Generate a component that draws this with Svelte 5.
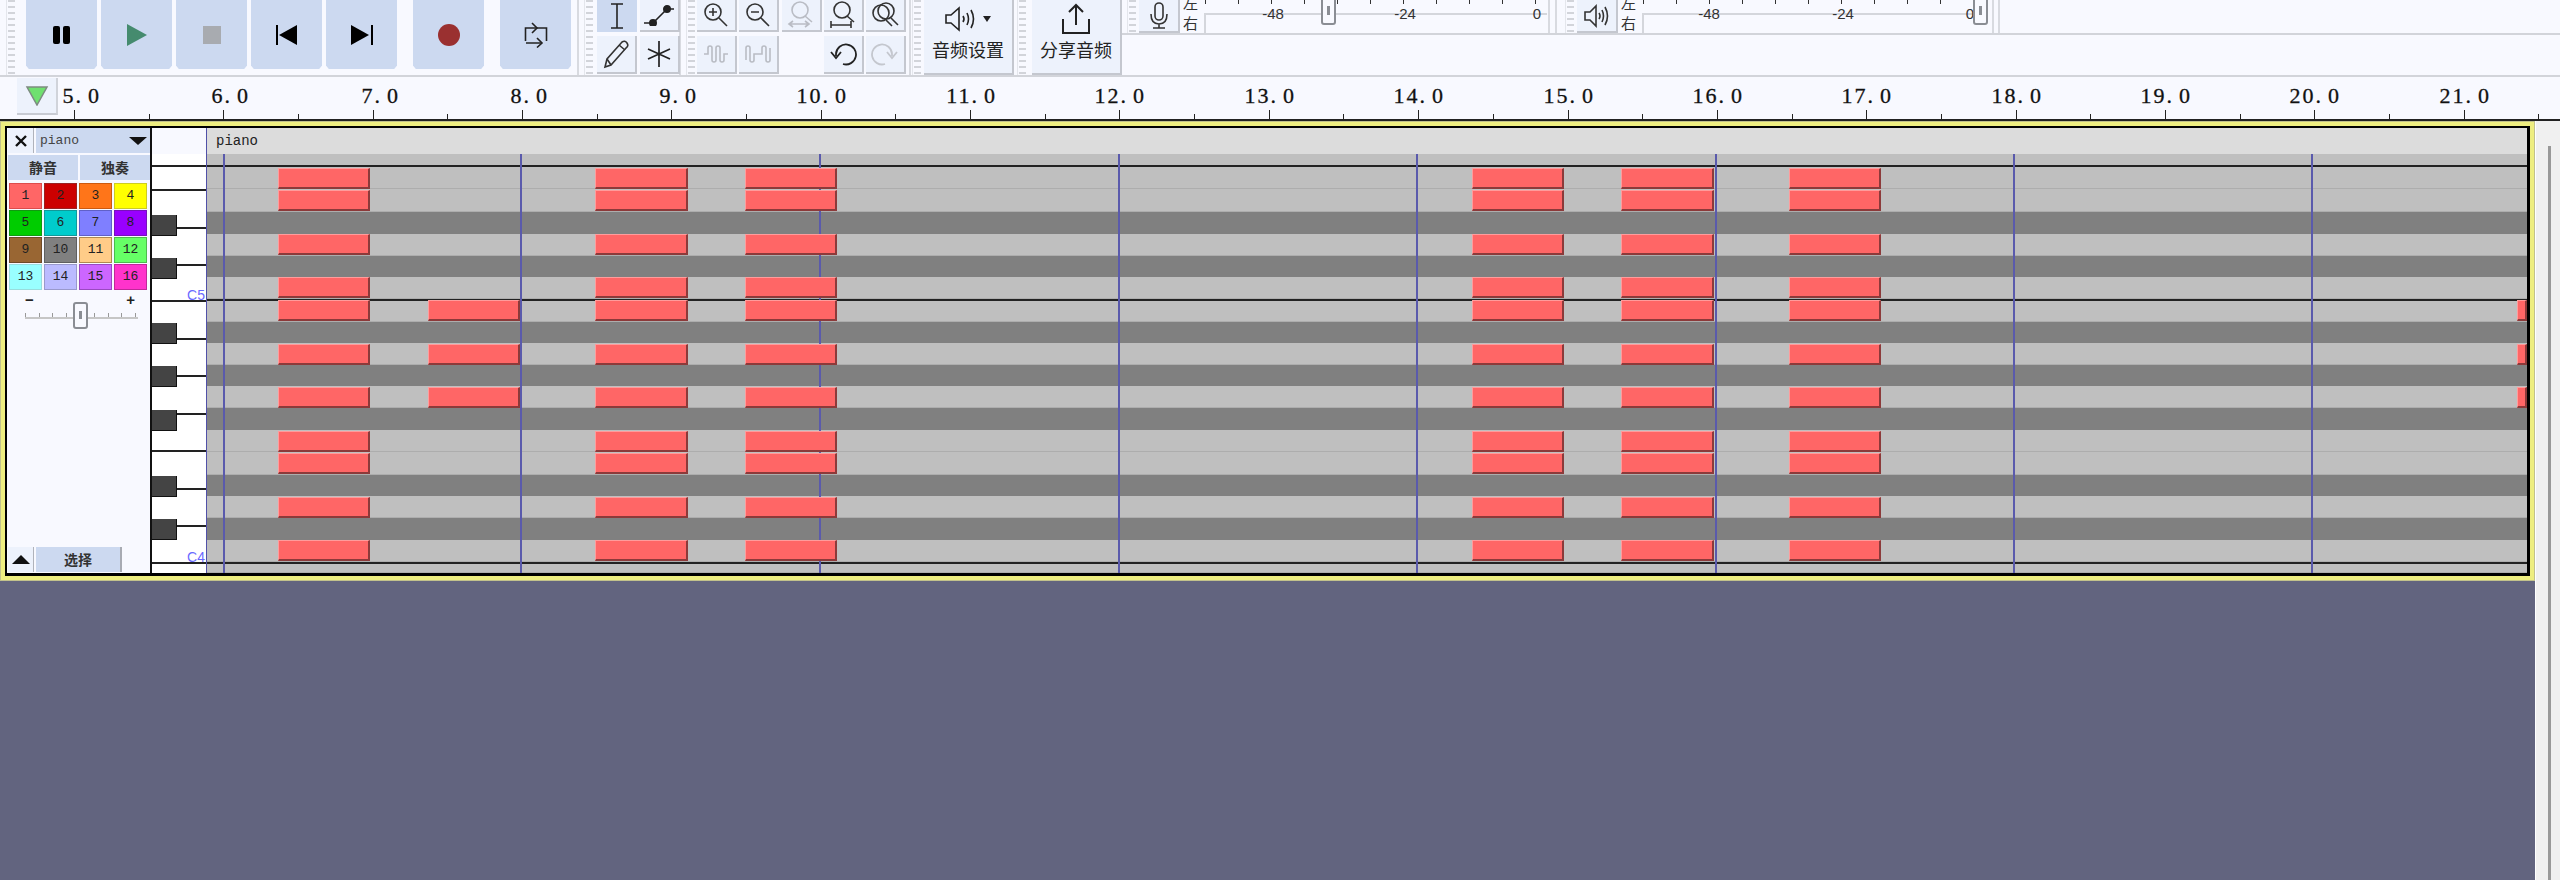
<script lang="ts">
  const TICK_START = 74;
  const TICK_STEP = 149.35;

  const seconds = Array.from({ length: 17 }, (_, i) => i + 5);
  const tickX = (n: number) => Math.round(TICK_START + (n - 5) * TICK_STEP);
  const minorX = (n: number) => Math.round(TICK_START + (n - 5) * TICK_STEP + TICK_STEP / 2);

  const CHANNELS = [
    ['#ff6666', '#dd4c4c'], ['#cc0000', '#992222'], ['#ff7519', '#cc5a10'], ['#ffff00', '#cccc22'],
    ['#00cc00', '#119911'], ['#00cccc', '#119999'], ['#7f7fff', '#6060c8'], ['#9900ff', '#7711bb'],
    ['#996633', '#6e4a28'], ['#808080', '#5f5f5f'], ['#ffcc88', '#b08850'], ['#66ff66', '#4dbb4d'],
    ['#99ffff', '#99dddd'], ['#bbbbff', '#9999cc'], ['#cc66ff', '#9949c0'], ['#ff33cc', '#c0279a'],
  ];

  // [top y in the roll, dark key lane]
  const LANES: [number, boolean][] = [
    [26, false], [39, false], [61, false], [84, true], [106, false], [128, true], [149, false],
    [171, false], [194, true], [215, false], [237, true], [258, false], [280, true], [302, false],
    [324, false], [347, true], [368, false], [390, true], [412, false], [434, false],
  ];
  const ROLL_BOTTOM = 445;

  const laneHeight = (i: number) => (i + 1 < LANES.length ? LANES[i + 1][0] : ROLL_BOTTOM) - LANES[i][0];

  const ALL_ROWS = [40, 62, 106, 149, 172, 216, 259, 303, 325, 369, 412];
  const SHORT_ROWS = [172, 216, 259];
  const PHRASES = [[71, 92], [388, 93], [538, 92], [1265, 92], [1414, 93], [1582, 92]];

  const notes = [
    ...PHRASES.flatMap(([x, w]) => ALL_ROWS.map((y) => ({ x, y, w }))),
    ...SHORT_ROWS.map((y) => ({ x: 221, y, w: 92 })),
    ...SHORT_ROWS.map((y) => ({ x: 2310, y, w: 10 })),
  ];

  const BARS = [16, 313, 612, 911, 1209, 1508, 1806, 2104];
  const OCTAVES = [37, 171, 434];

  const KEY_LINES = [37, 61, 99, 136, 172, 210, 247, 285, 322, 360, 397, 434];
  const BLACK_KEYS = [87, 130, 195, 238, 282, 348, 391];
  const SLIDER_TICKS = [0, 14, 27, 41, 55, 69, 83, 96, 110];
  const METER_TICKS = [0, 33, 66, 99, 132, 165, 198, 231, 264, 297, 330];
</script>

{#snippet grip()}
  <div class="grip"></div>
{/snippet}

{#snippet meter(labels: [string, number][], thumb: number)}
  <div class="meter">
    <div class="meter-rail"></div>
    {#each METER_TICKS as t}
      <span class="meter-tick" style="left: {4 + t}px"></span>
    {/each}
    {#each labels as [text, x]}
      <span class="meter-label" style="left: {x}px">{text}</span>
    {/each}
    <div class="meter-thumb" style="left: {thumb}px"></div>
  </div>
{/snippet}

<div class="app">
  <div class="toolbar">
    <div class="group transport">
      {@render grip()}
      <button class="play-btn">
        <svg width="20" height="20" viewBox="0 0 20 20"><rect x="1" y="1" width="7" height="18" rx="2" fill="#000" /><rect x="11" y="1" width="7" height="18" rx="2" fill="#000" /></svg>
      </button>
      <button class="play-btn">
        <svg width="22" height="24" viewBox="0 0 22 24"><path d="M1 1 L21 12 L1 23 Z" fill="#458b6e" /></svg>
      </button>
      <button class="play-btn">
        <svg width="20" height="20" viewBox="0 0 20 20"><rect x="1" y="1" width="18" height="18" fill="#a8abb0" /></svg>
      </button>
      <button class="play-btn">
        <svg width="22" height="20" viewBox="0 0 22 20"><rect x="0" y="0" width="2" height="20" fill="#000" /><path d="M3 10 L21 0 L21 20 Z" fill="#000" /></svg>
      </button>
      <button class="play-btn">
        <svg width="22" height="20" viewBox="0 0 22 20"><path d="M0 0 L18 10 L0 20 Z" fill="#000" /><rect x="20" y="0" width="2" height="20" fill="#000" /></svg>
      </button>
      <button class="play-btn record">
        <svg width="22" height="22" viewBox="0 0 22 22"><circle cx="11" cy="11" r="11" fill="#9a3030" /></svg>
      </button>
      <button class="play-btn loop">
        <svg width="24" height="26" viewBox="0 0 24 26" fill="none" stroke="#222" stroke-width="1.6">
          <path d="M1.5 19 V6 H22.5 V19" /><path d="M8 1 L13 6 L8 11" />
          <path d="M2 21 H17" /><path d="M13 16 L18 21 L13 25.5" />
        </svg>
      </button>
    </div>

    <div class="group tools">
      {@render grip()}
      <div class="tool-grid">
        <button class="tool active">
          <svg width="20" height="26" viewBox="0 0 20 26" fill="none" stroke="#222" stroke-width="1.6"><path d="M4 1 H16 M10 1 V25 M4 25 H16" /></svg>
        </button>
        <button class="tool">
          <svg width="32" height="22" viewBox="0 0 32 22" fill="none" stroke="#222" stroke-width="1.6"><path d="M1 19 H10 L24 5 H31" /><circle cx="10" cy="19" r="3.2" fill="#222" /><circle cx="24" cy="5" r="3.2" fill="#222" /></svg>
        </button>
        <button class="tool low">
          <svg width="26" height="30" viewBox="0 0 26 30" fill="none" stroke="#333" stroke-width="1.6"><path d="M2 28 L4 20 L19 3 Q22 1 24 4 Q26 7 23 9 L8 26 Z" /><path d="M16 6 L22 11 M4 20 L8 26" /></svg>
        </button>
        <button class="tool low">
          <svg width="24" height="28" viewBox="0 0 24 28" fill="none" stroke="#222" stroke-width="1.7"><path d="M12 1 V27 M1 9 L23 19 M23 9 L1 19" /></svg>
        </button>
      </div>
    </div>

    <div class="group zooms">
      {@render grip()}
      <div class="zoom-grid">
        <button class="tool">
          <svg width="26" height="26" viewBox="0 0 26 26" fill="none" stroke="#333" stroke-width="1.6"><circle cx="10" cy="10" r="8" /><path d="M16 16 L24 24 M6 10 H14 M10 6 V14" /></svg>
        </button>
        <button class="tool">
          <svg width="26" height="26" viewBox="0 0 26 26" fill="none" stroke="#333" stroke-width="1.6"><circle cx="10" cy="10" r="8" /><path d="M16 16 L24 24 M6 10 H14" /></svg>
        </button>
        <button class="tool">
          <svg width="28" height="28" viewBox="0 0 28 28" fill="none" stroke="#b9bcc4" stroke-width="1.6"><circle cx="13" cy="9" r="8" /><path d="M18 15 L25 21 M2 23 H22 M6 20 L2 23 L6 26 M18 20 L22 23 L18 26" /></svg>
        </button>
        <button class="tool">
          <svg width="28" height="28" viewBox="0 0 28 28" fill="none" stroke="#333" stroke-width="1.6"><circle cx="13" cy="9" r="8" /><path d="M18 15 L25 21 M2 24 H22 M2 20 V27 M22 20 V27" /></svg>
        </button>
        <button class="tool">
          <svg width="28" height="28" viewBox="0 0 28 28" fill="none" stroke="#333" stroke-width="1.6"><circle cx="15" cy="10" r="8" /><circle cx="10" cy="12" r="8" /><path d="M20 17 L27 24 M15 19 L21 25" /></svg>
        </button>
        <button class="tool low">
          <svg width="26" height="22" viewBox="0 0 26 22" fill="none" stroke="#b9bcc4" stroke-width="1.6"><path d="M1 11 H5 V5 A2 2 0 0 1 9 5 V17 A2 2 0 0 0 13 17 V5 A2 2 0 0 1 17 5 V17 A2 2 0 0 0 21 17 V11 H25" /></svg>
        </button>
        <button class="tool low">
          <svg width="26" height="22" viewBox="0 0 26 22" fill="none" stroke="#b9bcc4" stroke-width="1.6"><path d="M1 17 V5 A2 2 0 0 1 5 5 V17 A2 2 0 0 0 9 17 V11 H17 V5 A2 2 0 0 1 21 5 V17 A2 2 0 0 0 25 17 V5" /></svg>
        </button>
        <div class="tool-gap"></div>
        <button class="tool low">
          <svg width="28" height="28" viewBox="0 0 28 28" fill="none" stroke="#222" stroke-width="1.8"><path d="M7 16 V14 A10 10 0 1 1 14 24" /><path d="M2 12 L7 18 L12 12" /></svg>
        </button>
        <button class="tool low">
          <svg width="28" height="28" viewBox="0 0 28 28" fill="none" stroke="#c4c7ce" stroke-width="1.8"><path d="M21 16 V14 A10 10 0 1 0 14 24" /><path d="M16 12 L21 18 L26 12" /></svg>
        </button>
      </div>
    </div>

    <div class="group big-group audio">
      {@render grip()}
      <button class="big-btn">
        <span class="big-icon">
          <svg width="46" height="26" viewBox="0 0 46 26" fill="none" stroke="#222" stroke-width="1.6">
            <path d="M1 9 H6 L14 2 V24 L6 17 H1 Z" /><path d="M18 10 Q20 13 18 16 M22 7 Q25 13 22 19 M26 4 Q31 13 26 22" />
            <path d="M38 10 H46 L42 16 Z" fill="#222" stroke="none" />
          </svg>
        </span>
        <span class="big-label">音频设置</span>
      </button>
    </div>

    <div class="group big-group share-group">
      {@render grip()}
      <button class="big-btn">
        <span class="big-icon">
          <svg width="30" height="32" viewBox="0 0 30 32" fill="none" stroke="#222" stroke-width="2"><path d="M15 22 V3 M8 9 L15 2 L22 9 M2 16 V30 H28 V16" /></svg>
        </span>
        <span class="big-label">分享音频</span>
      </button>
    </div>

    <div class="meters">
      <div class="meter-row">
        {@render grip()}
        <button class="tool meter-btn">
          <svg width="20" height="28" viewBox="0 0 20 28" fill="none" stroke="#333" stroke-width="1.6"><rect x="6" y="1" width="8" height="17" rx="4" /><path d="M2 12 Q2 22 10 22 Q18 22 18 12 M10 22 V26 M4 26 H16" /></svg>
        </button>
        <div class="lr"><span>左</span><span>右</span></div>
        {@render meter([['-48', 72], ['-24', 204], ['0', 336]], 120)}
        <div class="rule-pair"></div>
        {@render grip()}
        <button class="tool meter-btn">
          <svg width="26" height="24" viewBox="0 0 26 24" fill="none" stroke="#333" stroke-width="1.6"><path d="M1 8 H6 L12 2 V22 L6 16 H1 Z" /><path d="M15 9 Q17 12 15 15 M18 6 Q21 12 18 18 M21 3 Q26 12 21 21" /></svg>
        </button>
        <div class="lr"><span>左</span><span>右</span></div>
        {@render meter([['-48', 70], ['-24', 204], ['0', 331]], 334)}
        <div class="rule-end"></div>
      </div>
    </div>
  </div>

  <div class="ruler">
    <div class="ruler-start">
      <svg width="24" height="20" viewBox="0 0 24 20"><path d="M2 1 H22 L12 19 Z" fill="#6fe06f" stroke="#7d8a80" stroke-width="1.5" /></svg>
    </div>
    {#each seconds as n}
      <span class="tick major" style="left: {tickX(n)}px"></span>
      <span class="tick minor" style="left: {minorX(n)}px"></span>
      <span class="ruler-label" style="left: {tickX(n) + 27}px">{n}<span class="dot">.</span>0</span>
    {/each}
  </div>

  <div class="main">
    <div class="tracks">
      <div class="track">
        <div class="track-inner">
          <div class="control">
            <div class="ctl-row">
              <button class="ctl-close">
                <svg width="14" height="14" viewBox="0 0 14 14" stroke="#111" stroke-width="2.4"><path d="M2 2 L12 12 M12 2 L2 12" /></svg>
              </button>
              <button class="ctl-name">
                <span>piano</span>
                <svg width="18" height="8" viewBox="0 0 18 8"><path d="M0 0 H18 L9 8 Z" fill="#111" /></svg>
              </button>
            </div>
            <div class="ctl-row second">
              <button class="ctl-half">静音</button>
              <button class="ctl-half">独奏</button>
            </div>
            <div class="channels">
              {#each CHANNELS as [bg, edge], i}
                <span class="channel" style="background: {bg}; border-color: {edge}">{i + 1}</span>
              {/each}
            </div>
            <div class="velocity">
              <div class="velocity-signs"><span>−</span><span>+</span></div>
              <div class="velocity-slider">
                {#each SLIDER_TICKS as t}
                  <span class="velocity-tick" style="left: {t}px"></span>
                {/each}
                <div class="velocity-thumb"></div>
              </div>
            </div>
            <div class="ctl-bottom">
              <button class="ctl-up">
                <svg width="18" height="9" viewBox="0 0 18 9"><path d="M0 9 H18 L9 0 Z" fill="#111" /></svg>
              </button>
              <button class="ctl-select">选择</button>
            </div>
          </div>

          <div class="keys">
            {#each KEY_LINES as y}
              <span class="key-line" style="top: {y}px"></span>
            {/each}
            {#each BLACK_KEYS as y}
              <span class="black-key" style="top: {y}px"></span>
            {/each}
            <span class="note-name" style="top: 160px">C5</span>
            <span class="note-name" style="top: 422px">C4</span>
          </div>

          <div class="roll">
            <div class="clip-title">piano</div>
            <div class="lanes">
              {#each LANES as [y, dark], i}
                <div class="lane" class:dark style="height: {laneHeight(i)}px"></div>
              {/each}
            </div>
            {#each OCTAVES as y}
              <span class="octave" style="top: {y}px"></span>
            {/each}
            {#each BARS as x}
              <span class="bar" style="left: {x}px"></span>
            {/each}
            {#each notes as note}
              <span class="note" style="left: {note.x}px; top: {note.y}px; width: {note.w}px"></span>
            {/each}
          </div>
        </div>
      </div>
    </div>
    <div class="scrollbar"><div class="scroll-thumb"></div></div>
  </div>
</div>

<style>
  :global(body) {
    margin: 0;
    background: #f8f9ff;
  }

  button {
    padding: 0;
    margin: 0;
    border: none;
    font: inherit;
  }

  .app {
    width: 2560px;
    height: 880px;
    display: flex;
    flex-direction: column;
    overflow: hidden;
    background: #f8f9ff;
    font-family: "Liberation Sans", "Noto Sans CJK SC", sans-serif;
  }

  /* toolbar */
  .toolbar {
    height: 77px;
    box-sizing: border-box;
    display: flex;
    border-bottom: 2px solid #d2d4da;
  }

  .group {
    display: flex;
    height: 75px;
    border-right: 2px solid #d8dae0;
    box-sizing: border-box;
  }

  .grip {
    width: 10px;
    box-sizing: border-box;
    flex: none;
    margin: 0 3px 0 5px;
    border-left: 1px solid #e4e6ec;
    background: repeating-linear-gradient(to bottom, #d2d4da 0 2px, transparent 2px 6px);
    background-size: 7px 100%;
    background-repeat: no-repeat;
    background-position: center;
  }

  .transport {
    width: 579px;
    gap: 4px;
    padding-left: 1px;
  }

  .transport .grip {
    margin-right: 6px;
  }

  .play-btn {
    width: 71px;
    height: 69px;
    background: #ccd9f0;
    display: flex;
    align-items: center;
    justify-content: center;
    clip-path: polygon(0 0, 100% 0, 100% 95%, 96% 100%, 4% 100%, 0 95%);
  }

  .record {
    margin-left: 12px;
  }

  .loop {
    margin-left: 12px;
  }

  .tools {
    width: 102px;
  }

  .tool-grid {
    display: grid;
    grid-template-columns: 40px 40px;
    grid-template-rows: 32px 38px;
    gap: 4px 3px;
  }

  .tool {
    background: #edf2fc;
    border-right: 2px solid #c4c7cf;
    border-bottom: 2px solid #c4c7cf;
    box-sizing: border-box;
    display: flex;
    align-items: center;
    justify-content: center;
    width: 100%;
    height: 100%;
  }

  .tool.active {
    background: #ccd9f0;
    border: none;
  }

  .zooms {
    width: 230px;
  }

  .zooms .grip {
    margin-right: 1px;
  }

  .zoom-grid {
    display: grid;
    grid-template-columns: repeat(5, 40px);
    grid-template-rows: 32px 38px;
    gap: 4px 2.25px;
  }

  .big-group {
    border-right: none;
  }

  .audio .grip {
    margin: 0 2px 0 1px;
  }

  .share-group .grip {
    margin: 0 5px 0 3px;
  }

  .big-btn {
    width: 90px;
    height: 75px;
    background: #edf2fc;
    border-right: 2px solid #c4c7cf;
    border-bottom: 2px solid #c4c7cf;
    box-sizing: border-box;
    display: flex;
    flex-direction: column;
    align-items: center;
  }

  .big-icon {
    height: 38px;
    display: flex;
    align-items: center;
  }

  .big-label {
    font-size: 18px;
    line-height: 22px;
    margin-top: 2px;
    color: #222;
  }

  .meters {
    flex: 1;
    min-width: 0;
  }

  .meter-row {
    height: 33px;
    display: flex;
    border-bottom: 2px solid #d2d4da;
  }

  .meter-row .grip {
    margin-right: 2px;
  }

  .meter-btn {
    width: 41px;
    height: 33px;
    flex: none;
  }

  .lr {
    width: 18px;
    flex: none;
    margin-left: 3px;
    font-size: 15px;
    line-height: 20px;
    color: #333;
    display: flex;
    flex-direction: column;
    justify-content: flex-end;
    font-family: "Noto Sans CJK SC", sans-serif;
  }

  .meter {
    position: relative;
    width: 346px;
    flex: none;
  }

  .meter-rail {
    position: absolute;
    left: 3px;
    right: 0;
    top: 13px;
    bottom: 0;
    border-top: 2px solid #d4d6dc;
    border-left: 2px solid #d4d6dc;
  }

  .meter-tick {
    position: absolute;
    top: 0;
    width: 1px;
    height: 4px;
    background: #333;
  }

  .meter-label {
    position: absolute;
    top: 5px;
    transform: translateX(-50%);
    font-size: 15px;
    line-height: 17px;
    color: #333;
  }

  .meter-thumb {
    position: absolute;
    top: -6px;
    width: 15px;
    height: 31px;
    box-sizing: border-box;
    background: #f8f9ff;
    border: 2px solid #8a8d94;
    border-radius: 3px;
  }

  .meter-thumb::after {
    content: "";
    position: absolute;
    left: 4px;
    top: 10px;
    width: 3px;
    height: 9px;
    background: #8a8d94;
  }

  .rule-pair {
    width: 9px;
    flex: none;
    margin: 0 3px 0 1px;
    border-left: 2px solid #d8dae0;
    border-right: 2px solid #d8dae0;
    box-sizing: border-box;
  }

  .rule-end {
    width: 4px;
    margin-left: 7px;
    border-left: 2px solid #d8dae0;
    border-right: 2px solid #d8dae0;
  }

  /* ruler */
  .ruler {
    position: relative;
    height: 44px;
    box-sizing: border-box;
    flex: none;
    border-bottom: 2px solid #222;
  }

  .ruler-start {
    position: absolute;
    left: 17px;
    top: 1px;
    width: 41px;
    height: 37px;
    box-sizing: border-box;
    background: #edf2fc;
    border-right: 2px solid #d0d3da;
    border-bottom: 2px solid #c8cbd3;
    display: flex;
    align-items: center;
    justify-content: center;
  }

  .tick {
    position: absolute;
    bottom: 0;
    width: 1px;
    background: #222;
  }

  .tick.major {
    height: 9px;
  }

  .tick.minor {
    height: 5px;
  }

  .ruler-label {
    position: absolute;
    top: 7px;
    transform: translateX(-100%);
    font-family: "Liberation Serif", serif;
    font-size: 22px;
    line-height: 24px;
    letter-spacing: 2px;
    color: #111;
    -webkit-text-stroke: 0.3px #111;
  }

  .dot {
    letter-spacing: 7px;
  }

  /* track area */
  .main {
    flex: 1;
    display: flex;
    min-height: 0;
  }

  .tracks {
    width: 2535px;
    flex: none;
    background: #62647f;
    box-sizing: border-box;
  }

  .scrollbar {
    flex: 1;
    background: #f0f0f0;
    border-left: 1px solid #fff;
    padding: 25px 0 0 12px;
    box-sizing: border-box;
  }

  .scroll-thumb {
    width: 3px;
    height: 100%;
    background: #999;
  }

  .track {
    height: 460px;
    box-sizing: border-box;
    border: 1px solid #c2c28c;
    padding: 4px;
    background: #eeee80;
  }

  .track-inner {
    height: 100%;
    box-sizing: border-box;
    display: flex;
    border-style: solid;
    border-color: #000;
    border-width: 2px 3px 3px 2px;
  }

  /* left control panel */
  .control {
    width: 145px;
    flex: none;
    box-sizing: border-box;
    border-right: 2px solid #111;
    padding-left: 1px;
    display: flex;
    flex-direction: column;
    background: #f8f9ff;
  }

  .ctl-row {
    display: flex;
    gap: 2px;
    height: 25px;
    flex: none;
  }

  .ctl-row.second {
    margin-top: 2px;
  }

  .ctl-close {
    width: 26px;
    background: #edf2fc;
    border-right: 1px solid #b0b3bb;
    display: flex;
    align-items: center;
    justify-content: center;
  }

  .ctl-name {
    flex: 1;
    background: #ccd9f0;
    display: flex;
    align-items: center;
    justify-content: space-between;
    padding: 0 3px 0 4px;
    font-family: "Liberation Mono", monospace;
    font-size: 13px;
    color: #444;
  }

  .ctl-half {
    flex: 1;
    background: #ccd9f0;
    font-size: 14px;
    line-height: 25px;
    font-weight: 700;
    color: #333;
    font-family: "Noto Sans CJK SC", sans-serif;
  }

  .channels {
    display: grid;
    grid-template-columns: repeat(4, 1fr);
    grid-auto-rows: 26px;
    gap: 1px 2px;
    margin: 3px 3px 0 1px;
    flex: none;
  }

  .channel {
    border-width: 1px;
    border-style: solid;
    box-sizing: border-box;
    text-align: center;
    font-size: 13px;
    line-height: 24px;
    color: #222;
    font-family: "Liberation Mono", monospace;
  }

  .velocity {
    margin: 3px 0 0 17px;
    width: 113px;
    flex: none;
  }

  .velocity-signs {
    display: flex;
    justify-content: space-between;
    font-size: 15px;
    line-height: 14px;
    color: #222;
    padding: 0 3px 0 0;
    font-weight: 700;
  }

  .velocity-slider {
    position: relative;
    height: 12px;
    margin-top: -2px;
    border-bottom: 2px solid #c6c6c6;
  }

  .velocity-tick {
    position: absolute;
    bottom: 0;
    width: 1px;
    height: 4px;
    background: #999;
  }

  .velocity-thumb {
    position: absolute;
    left: 48px;
    top: -3px;
    width: 15px;
    height: 27px;
    box-sizing: border-box;
    border: 2px solid #8a8d94;
    border-radius: 3px;
    background: #f8f9ff;
  }

  .velocity-thumb::after {
    content: "";
    position: absolute;
    left: 4px;
    top: 7px;
    width: 3px;
    height: 8px;
    background: #8a8d94;
  }

  .ctl-bottom {
    margin-top: auto;
    margin-bottom: 1px;
    display: flex;
    gap: 2px;
    height: 25px;
    width: 114px;
  }

  .ctl-up {
    width: 26px;
    background: #edf2fc;
    border-right: 1px solid #b0b3bb;
    display: flex;
    align-items: center;
    justify-content: center;
  }

  .ctl-select {
    flex: 1;
    background: #ccd9f0;
    border-right: 2px solid #a8abb3;
    font-size: 14px;
    font-weight: 700;
    line-height: 25px;
    color: #333;
    font-family: "Noto Sans CJK SC", sans-serif;
  }

  /* piano keys */
  .keys {
    position: relative;
    width: 55px;
    flex: none;
    box-sizing: border-box;
    border-right: 1px solid #5050a8;
    background: linear-gradient(to bottom, #f8f9ff 26px, #fff 26px);
  }

  .key-line {
    position: absolute;
    left: 0;
    right: 0;
    height: 2px;
    background: #222;
  }

  .black-key {
    position: absolute;
    left: 0;
    width: 24px;
    height: 20px;
    background: #444;
    border-bottom: 1px solid #111;
    border-right: 1px solid #111;
  }

  .note-name {
    position: absolute;
    right: 1px;
    font-size: 14px;
    line-height: 14px;
    color: #6a6aff;
    z-index: 1;
  }

  /* piano roll */
  .roll {
    position: relative;
    flex: 1;
    overflow: hidden;
  }

  .clip-title {
    height: 26px;
    padding-left: 9px;
    background: #dcdcdc;
    font-family: "Liberation Mono", monospace;
    font-size: 14px;
    line-height: 26px;
    color: #222;
  }

  .lane {
    box-sizing: border-box;
    background: #bfbfbf;
    border-bottom: 1px solid #adadad;
  }

  .lane.dark {
    background: #808080;
    border-bottom: none;
  }

  .octave {
    position: absolute;
    left: 0;
    right: 0;
    height: 2px;
    background: #222;
  }

  .bar {
    position: absolute;
    top: 26px;
    bottom: 0;
    width: 2px;
    background: #5a5aac;
  }

  .note {
    position: absolute;
    height: 21px;
    box-sizing: border-box;
    background: #ff6666;
    border-style: solid;
    border-width: 1px 2px 2px 1px;
    border-color: #ff9c9c #8c3a3a #8c3a3a #ff9c9c;
  }
</style>
